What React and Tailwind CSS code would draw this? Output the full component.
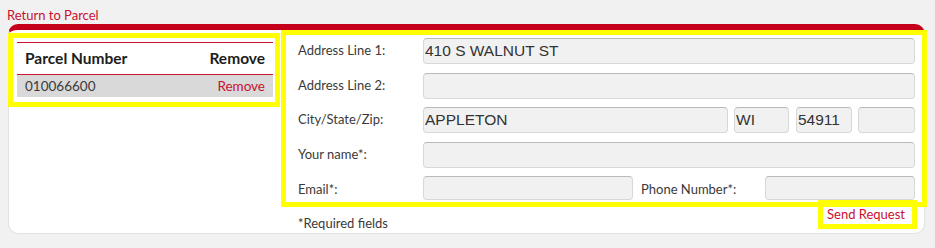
const lato = { fontFamily: "Lato, 'Open Sans', sans-serif" };

const Field = ({ value = "", className = "", h = "h-[26px]" }) => (
  <div
    className={`${h} flex items-center rounded-[4px] border border-[#d8d8d8] border-t-[#b9b9b9] bg-[#f1f1f1] pl-[1px] text-[15.5px] text-[#333] font-['Liberation_Sans',Arial,sans-serif] ${className}`}
  >
    {value}
  </div>
);

const Label = ({ children, className = "w-[125px]" }) => (
  <div className={`flex-none text-[13px] text-[#3a3a3a] ${className}`}>{children}</div>
);

export default function App() {
  return (
    <div className="w-[935px] h-[248px] bg-[#f1f1f1] overflow-hidden" style={lato}>
      <div className="pt-[6px] pl-[7px] text-[13px] leading-[18px] text-[#c8102e]">
        Return to Parcel
      </div>

      <div className="ml-[8px] w-[917px] h-[210px] rounded-[10px] border border-[#e2e2e2] border-t-[6px] border-t-[#c4001a] bg-white">
        <div className="flex">
          {/* parcel list */}
          <div className="-ml-px w-[273px] flex-none pt-[3px]">
            <div className="h-[74px] w-[272px] border-[5px] border-[#ffff00]">
              <div className="ml-[4px] mt-[4px] w-[256px]">
                <div className="flex h-[33px] items-center justify-between border-y border-[#d0142f] px-[8px] text-[15.5px] font-bold text-[#1c1c1c]">
                  <span>Parcel Number</span>
                  <span>Remove</span>
                </div>
                <div className="flex h-[22px] items-center justify-between bg-[#d9d9d9] px-[8px] text-[13.5px]">
                  <span className="text-[#3a3a3a]">010066600</span>
                  <span className="text-[#c8102e]">Remove</span>
                </div>
              </div>
            </div>
          </div>

          {/* request form */}
          <div className="w-[646px] flex-none">
            <div className="h-[177px] border-[5px] border-[#ffff00] pl-[12px] pr-[7px] pt-[3px]">
              <div className="flex items-center">
                <Label>Address Line 1:</Label>
                <Field value="410 S WALNUT ST" className="flex-1" />
              </div>
              <div className="mt-[9px] flex items-center">
                <Label>Address Line 2:</Label>
                <Field className="flex-1" />
              </div>
              <div className="mt-[8px] flex items-center">
                <Label>City/State/Zip:</Label>
                <Field value="APPLETON" className="w-[305px]" />
                <Field value="WI" className="ml-[6px] w-[55px]" />
                <Field value="54911" className="ml-[7px] w-[56px]" />
                <Field className="ml-[6px] flex-1" />
              </div>
              <div className="mt-[9px] flex items-center">
                <Label>Your name*:</Label>
                <Field className="flex-1" />
              </div>
              <div className="mt-[8px] flex items-start">
                <Label className="w-[125px] pt-[4px]">Email*:</Label>
                <Field className="w-[210px]" h="h-[24px]" />
                <Label className="ml-[8px] w-[124px] pt-[4px]">Phone Number*:</Label>
                <Field className="flex-1" h="h-[24px]" />
              </div>
            </div>

            <div className="flex h-[25px] items-start justify-between">
              <div className="pl-[17px] pt-[8px] text-[13px] leading-[16px] text-[#3a3a3a]">
                *Required fields
              </div>
              <div className="-mt-[7px] mr-[10px] h-[29px] w-[99px] border-[5px] border-[#ffff00] pl-[4px] text-[13px] leading-[19px] text-[#c8102e]">
                Send Request
              </div>
            </div>
          </div>
        </div>
      </div>
    </div>
  );
}
